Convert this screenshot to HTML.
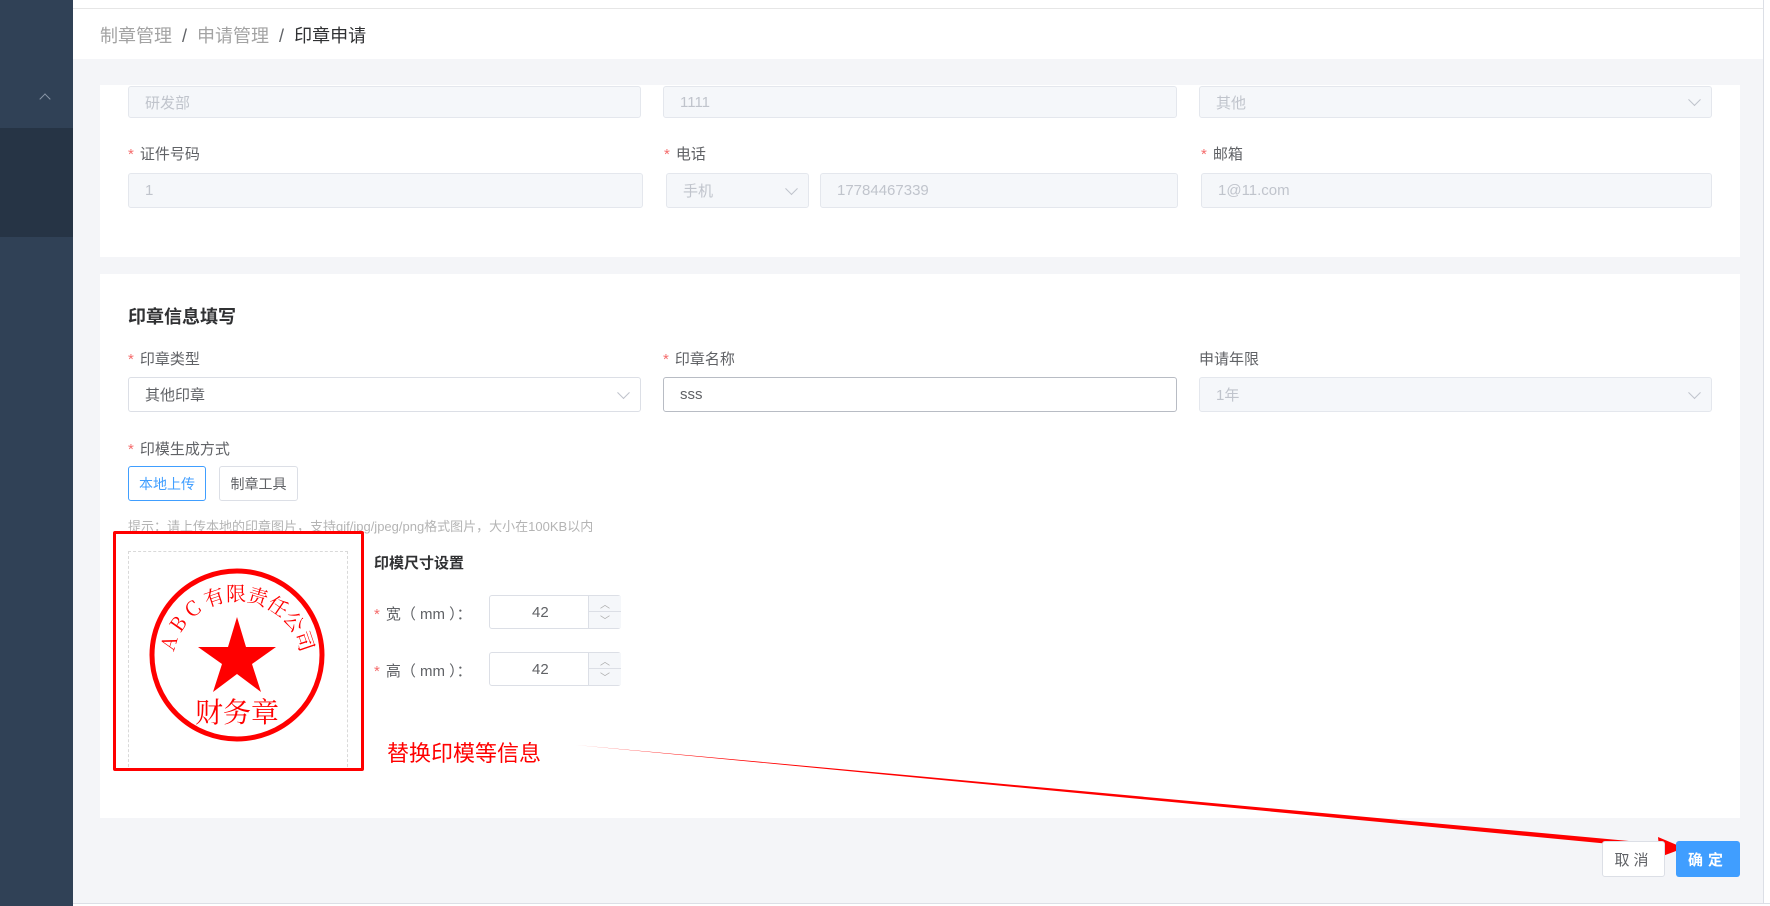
<!DOCTYPE html>
<html><head><meta charset="utf-8"><style>
*{box-sizing:border-box;margin:0;padding:0}
body{width:1770px;height:906px;overflow:hidden;background:#f4f5f8;font-family:"Liberation Sans","Noto Sans CJK SC",sans-serif;position:relative;color:#606266}
.a{position:absolute}
.inp{position:absolute;background:#f5f7fa;border:1px solid #e4e7ed;border-radius:3px;color:#c0c4cc;font-size:15px;padding-left:16px;display:flex;align-items:center}
.inp.w{background:#fff;border-color:#dcdfe6;color:#606266}
.lab{position:absolute;font-size:15px;color:#606266}
.lab i{color:#f56c6c;font-style:normal;margin-right:6px}
.chev{position:absolute;right:12px;top:50%;width:9px;height:9px;border-right:1px solid #c0c4cc;border-bottom:1px solid #c0c4cc;transform:translateY(-75%) rotate(45deg)}
</style></head><body>
<div class="a" style="left:0;top:0;width:73px;height:906px;background:#304156"></div>
<div class="a" style="left:0;top:128px;width:73px;height:109px;background:#263445"></div>
<div class="a" style="left:41px;top:95px;width:8px;height:8px;border-left:1px solid #8a97a8;border-top:1px solid #8a97a8;transform:rotate(45deg)"></div>
<div class="a" style="left:73px;top:0;width:1690px;height:9px;background:#fff;border-bottom:1px solid #e6e6e6"></div>
<div class="a" style="left:73px;top:9px;width:1690px;height:50px;background:#fff"></div>
<div class="a" style="left:1763px;top:0;width:7px;height:906px;background:#fff;border-left:1px solid #dcdfe6"></div>
<div class="a" style="left:73px;top:903px;width:1697px;height:3px;background:#fff;border-top:1px solid #dcdfe6"></div>
<div class="a" style="left:100px;top:22px;font-size:18px;color:#a3a3a3">制章管理 <span style="color:#606266;margin:0 5px">/</span> 申请管理 <span style="color:#606266;margin:0 5px">/</span> <span style="color:#303133">印章申请</span></div>

<div class="a" style="left:100px;top:85px;width:1640px;height:172px;background:#fff"></div>
<div class="inp" style="left:128px;top:86px;width:513px;height:32px">研发部</div>
<div class="inp" style="left:663px;top:86px;width:514px;height:32px">1111</div>
<div class="inp" style="left:1199px;top:86px;width:513px;height:32px">其他<span class="chev"></span></div>
<div class="lab" style="left:128px;top:143px"><i>*</i>证件号码</div>
<div class="lab" style="left:664px;top:143px"><i>*</i>电话</div>
<div class="lab" style="left:1201px;top:143px"><i>*</i>邮箱</div>
<div class="inp" style="left:128px;top:173px;width:515px;height:35px">1</div>
<div class="inp" style="left:666px;top:173px;width:143px;height:35px">手机<span class="chev"></span></div>
<div class="inp" style="left:820px;top:173px;width:358px;height:35px">17784467339</div>
<div class="inp" style="left:1201px;top:173px;width:511px;height:35px">1@11.com</div>

<div class="a" style="left:100px;top:274px;width:1640px;height:544px;background:#fff"></div>
<div class="a" style="left:128px;top:303px;font-size:18px;font-weight:bold;color:#303133">印章信息填写</div>
<div class="lab" style="left:128px;top:348px"><i>*</i>印章类型</div>
<div class="lab" style="left:663px;top:348px"><i>*</i>印章名称</div>
<div class="lab" style="left:1199px;top:348px">申请年限</div>
<div class="inp w" style="left:128px;top:377px;width:513px;height:35px">其他印章<span class="chev"></span></div>
<div class="inp w" style="left:663px;top:377px;width:514px;height:35px;border-color:#b8bcc4">sss</div>
<div class="inp" style="left:1199px;top:377px;width:513px;height:35px">1年<span class="chev"></span></div>
<div class="lab" style="left:128px;top:438px"><i>*</i>印模生成方式</div>
<div class="a" style="left:128px;top:466px;width:78px;height:35px;border:1px solid #409eff;border-radius:3px;color:#409eff;font-size:14px;display:flex;align-items:center;justify-content:center">本地上传</div>
<div class="a" style="left:219px;top:466px;width:79px;height:35px;border:1px solid #dcdfe6;border-radius:3px;color:#606266;font-size:14px;display:flex;align-items:center;justify-content:center">制章工具</div>
<div class="a" style="left:128px;top:516px;font-size:13px;color:#b4b4b4">提示：请上传本地的印章图片，支持gif/jpg/jpeg/png格式图片，大小在100KB以内</div>
<div class="a" style="left:128px;top:551px;width:220px;height:216px;border:1px dashed #d9d9d9;border-bottom:none"></div>
<svg class="a" style="left:140px;top:560px" width="200" height="200" viewBox="0 0 200 200">
<ellipse cx="97" cy="95" rx="85" ry="84" fill="none" stroke="#f00" stroke-width="5"/>
<polygon points="97,57 106,87 136,87 112,104 121,132 97,114 73,132 82,104 58,87 88,87" fill="#f00"/>
<text x="97" y="162" text-anchor="middle" font-size="28" fill="#f00" font-family="Noto Serif CJK SC,serif">财务章</text>
<path id="arc" d="M34,92 A64,62 0 0 1 160,92" fill="none"/>
<text font-size="20" fill="#f00" font-family="Noto Serif CJK SC,serif"><textPath href="#arc">A B C 有限责任公司</textPath></text>
</svg>
<div class="a" style="left:113px;top:531px;width:251px;height:240px;border:3px solid #f00;border-radius:2px"></div>
<div class="a" style="left:374px;top:552px;font-size:15px;font-weight:bold;color:#303133">印模尺寸设置</div>
<div class="lab" style="left:374px;top:603px"><i>*</i>宽（ mm ）：</div>
<div class="lab" style="left:374px;top:660px"><i>*</i>高（ mm ）：</div>
<div class="a" style="left:489px;top:595px;width:132px;height:34px;border:1px solid #dcdfe6;border-radius:3px;font-size:15px"><span class="a" style="left:42px;top:8px">42</span><div class="a" style="left:98px;top:0;width:33px;height:32px;border-left:1px solid #dcdfe6;background:#f5f7fa"><div style="height:16px;border-bottom:1px solid #dcdfe6;text-align:center;font-size:10px;color:#aaa">︿</div><div style="text-align:center;font-size:10px;color:#aaa">﹀</div></div></div>
<div class="a" style="left:489px;top:652px;width:132px;height:34px;border:1px solid #dcdfe6;border-radius:3px;font-size:15px"><span class="a" style="left:42px;top:8px">42</span><div class="a" style="left:98px;top:0;width:33px;height:32px;border-left:1px solid #dcdfe6;background:#f5f7fa"><div style="height:16px;border-bottom:1px solid #dcdfe6;text-align:center;font-size:10px;color:#aaa">︿</div><div style="text-align:center;font-size:10px;color:#aaa">﹀</div></div></div>
<div class="a" style="left:387px;top:736px;font-size:22px;color:#f00">替换印模等信息</div>
<svg class="a" style="left:0;top:0" width="1770" height="906"><polygon points="576,745 1662,844 1662,849" fill="#f00"/><polygon points="1684,848 1658,837 1660,857" fill="#f00"/></svg>
<div class="a" style="left:1602px;top:841px;width:63px;height:36px;border:1px solid #dcdfe6;border-radius:3px;background:#fff;font-size:15px;color:#606266;display:flex;align-items:center;justify-content:center;letter-spacing:4px">取消</div>
<div class="a" style="left:1676px;top:841px;width:64px;height:36px;border-radius:3px;background:#409eff;font-size:15px;color:#fff;font-weight:bold;display:flex;align-items:center;justify-content:center;letter-spacing:5px">确定</div>
</body></html>
